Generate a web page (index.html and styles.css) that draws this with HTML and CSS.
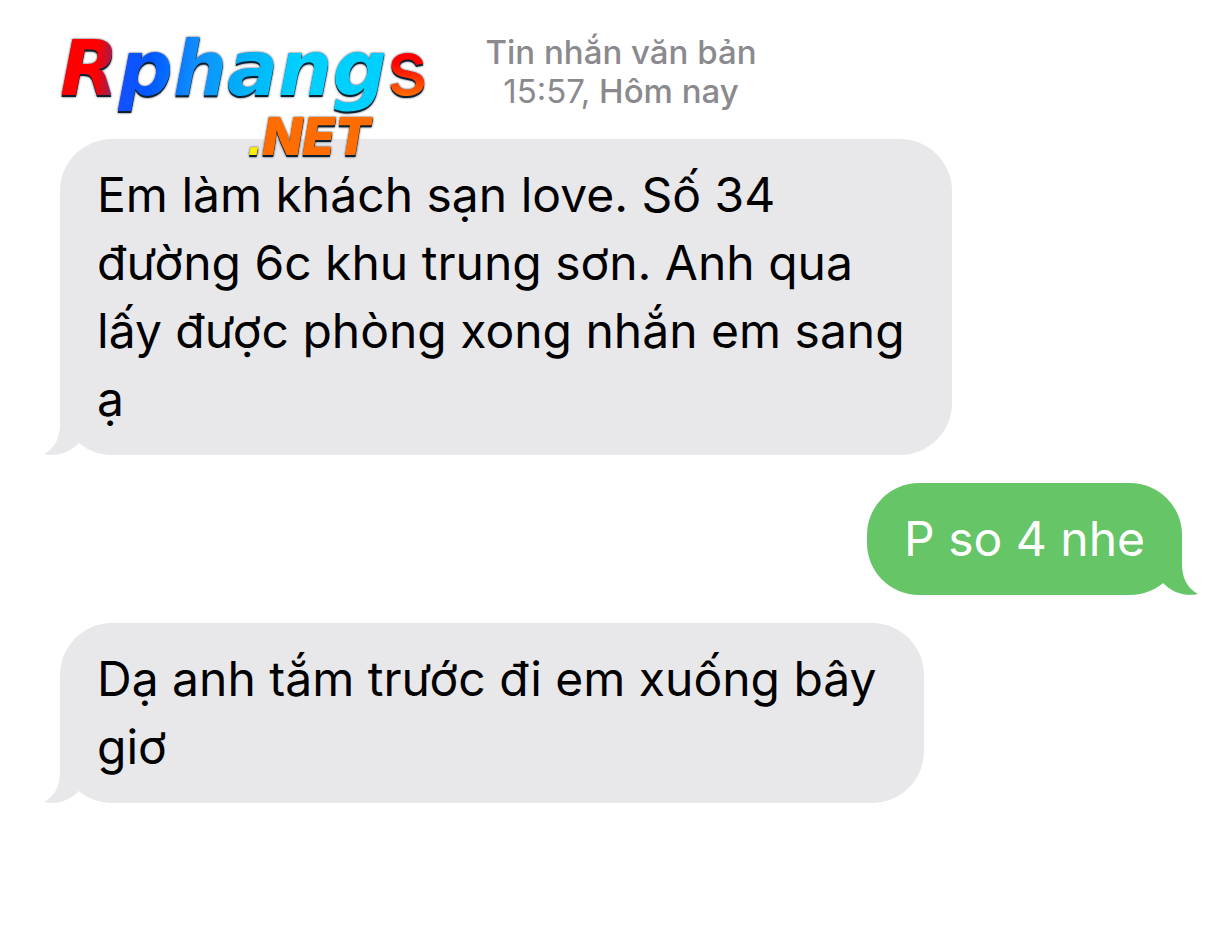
FILE: index.html
```
<!DOCTYPE html>
<html lang="vi">
<head>
  <meta charset="UTF-8">
  <meta name="viewport" content="width=device-width, initial-scale=1">
  <title>Tin nhắn văn bản</title>
  <link rel="stylesheet" href="styles.css">
</head>
<body>

<div class="logo">
  <div class="logo-name"><span class="logo-main">Rphang</span><span class="logo-s">s</span></div>
  <div class="logo-net"><span class="dot">.</span>NET</div>
</div>

<main class="chat">
  <header class="stamp">
    <div>Tin nhắn văn bản</div>
    <div><time>15:57,</time> Hôm nay</div>
  </header>

  <div class="bubble received">
    <svg class="tail" viewBox="0 0 60 62" aria-hidden="true"><path d="M16 0V30C16 44 11 54 0 60C14 63 26 58 35 49L60 30V0Z"/></svg>
    <p>Em làm khách sạn love. Số 34<br>đường 6c khu trung sơn. Anh qua<br>lấy được phòng xong nhắn em sang<br>ạ</p>
  </div>

  <div class="bubble sent">
    <svg class="tail" viewBox="0 0 60 62" aria-hidden="true"><path d="M16 0V30C16 44 11 54 0 60C14 63 26 58 35 49L60 30V0Z"/></svg>
    <p>P so 4 nhe</p>
  </div>

  <div class="bubble received">
    <svg class="tail" viewBox="0 0 60 62" aria-hidden="true"><path d="M16 0V30C16 44 11 54 0 60C14 63 26 58 35 49L60 30V0Z"/></svg>
    <p>Dạ anh tắm trước đi em xuống bây<br>giơ</p>
  </div>
</main>

</body>
</html>
```

FILE: styles.css
```
body {
  margin: 0;
  background: #fff;
  font-family: Inter, "Liberation Sans", sans-serif;
  color: #000;
}
.chat {
  display: flex;
  flex-direction: column;
  gap: 28px;
  padding: 33px 42px 40px 60px;
}
.stamp {
  text-align: center;
  font-size: 33px;
  font-weight: 500;
  line-height: 39px;
  color: #8a8a8e;
}
.stamp time {
  font-weight: 400;
}
.bubble {
  position: relative;
  padding: 22px 37px;
  border-radius: 52px;
  font-size: 48px;
  line-height: 68px;
}
.bubble p {
  position: relative;
  margin: 0;
}
.received {
  align-self: flex-start;
  padding-right: 47px;
  background: #e8e8ea;
  fill: #e8e8ea;
}
.sent {
  align-self: flex-end;
  background: #66c567;
  color: #fff;
  fill: #66c567;
}
.tail {
  position: absolute;
  left: -16px;
  bottom: -1px;
  width: 60px;
  height: 62px;
}
.sent .tail {
  left: auto;
  right: -16px;
  transform: scaleX(-1);
}

/* watermark over the conversation */
.logo {
  position: absolute;
  left: 60px;
  top: 19px;
  z-index: 1;
  font-style: italic;
  filter: drop-shadow(0 2px 0 #0a2030) drop-shadow(0 0 1px #445);
}
.logo-name {
  display: flex;
  align-items: baseline;
  line-height: 96px;
}
.logo-main {
  font-family: "DejaVu Sans", sans-serif;
  font-weight: 700;
  font-size: 76px;
  background: linear-gradient(95deg, #f00 12%, #b01840 16%, #1450ff 20%, #0058ff 28%, #1090ff 42%, #00b0f8 56%, #00d0ff 72%);
  -webkit-background-clip: text;
  background-clip: text;
  color: transparent;
}
.logo-s {
  font-style: normal;
  font-weight: 500;
  font-size: 76px;
  background: linear-gradient(#f00 45%, #ff6a00 80%);
  -webkit-background-clip: text;
  background-clip: text;
  color: transparent;
}
.logo-net {
  margin-left: 188px;
  font-size: 52px;
  font-weight: 900;
  line-height: 40px;
  color: #ff6d00;
}
.dot {
  font-family: "Liberation Sans", sans-serif;
  font-weight: 700;
  color: #ffee00;
}
```
